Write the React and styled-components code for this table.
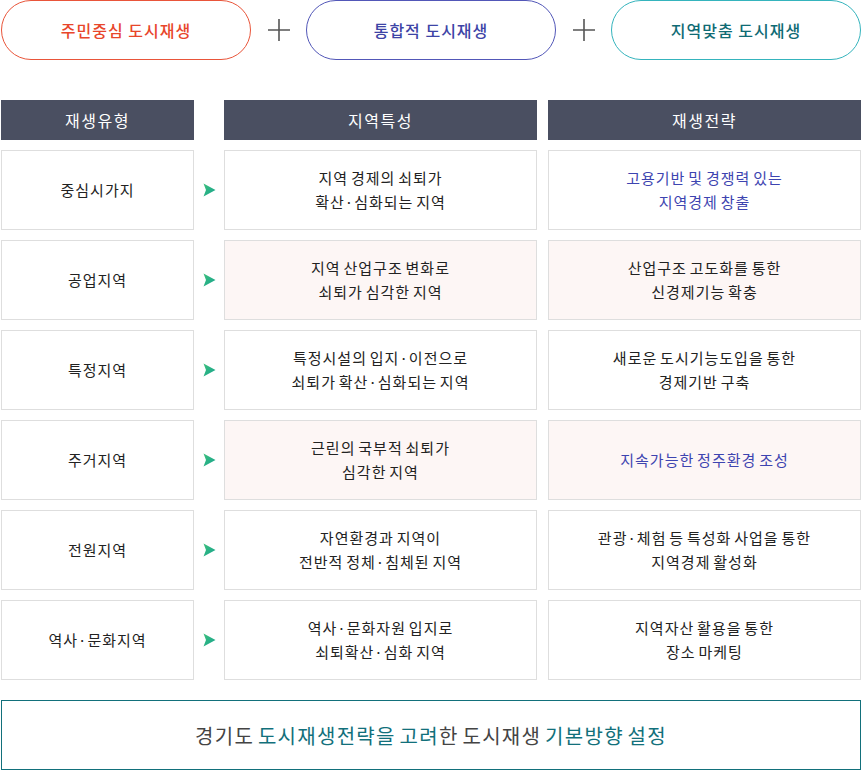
import React from 'react';
import styled, { createGlobalStyle } from 'styled-components';

const GlobalStyle = createGlobalStyle`
  body {
    margin: 0;
    background: #fff;
    font-family: "Noto Sans CJK KR", "Noto Sans", sans-serif;
  }
`;

const pillColors = {
  red: { border: '#e9553a', text: '#e8462b' },
  blue: { border: '#5257b8', text: '#3d44a6' },
  teal: { border: '#35b4bd', text: '#0f6b74' }
};

const Page = styled.div`
  width: 861px;
  padding-left: 1px;
  box-sizing: border-box;
`;

const PillBar = styled.div`
  display: flex;
  align-items: center;
  height: 60px;
`;

const Pill = styled.div`
  width: 250px;
  height: 60px;
  box-sizing: border-box;
  border: 1px solid ${props => pillColors[props.tone].border};
  border-radius: 30px;
  display: flex;
  align-items: center;
  justify-content: center;
  color: ${props => pillColors[props.tone].text};
  font-size: 16px;
  font-weight: 500;
  letter-spacing: 1px;
`;

const Plus = styled.div`
  width: ${props => props.width}px;
  display: flex;
  justify-content: center;
  align-items: center;
  height: 60px;
`;

const Table = styled.div`
  margin-top: 40px;
  display: grid;
  grid-template-columns: 193px 30px 313px 11px 313px;
  row-gap: 10px;
`;

const Head = styled.div`
  height: 40px;
  background: #4a4f61;
  color: #fff;
  font-size: 16px;
  letter-spacing: 1.5px;
  display: flex;
  align-items: center;
  justify-content: center;
  grid-column: ${props => props.col};
`;

const Cell = styled.div`
  height: 80px;
  box-sizing: border-box;
  border: 1px solid #dedede;
  background: ${props => (props.pink ? '#fdf6f5' : '#fff')};
  color: ${props => (props.blue ? '#3d44b0' : '#222')};
  font-size: 15px;
  line-height: 24px;
  letter-spacing: 1px;
  word-spacing: -1.5px;
  display: flex;
  align-items: center;
  justify-content: center;
  text-align: center;
  padding-bottom: 1px;
`;

const ArrowSlot = styled.div`
  display: flex;
  align-items: center;
  justify-content: center;
  padding-left: 1px;
`;

const Footer = styled.div`
  margin-top: 20px;
  height: 70px;
  box-sizing: border-box;
  border: 1px solid #12707b;
  display: flex;
  align-items: center;
  justify-content: center;
  font-size: 20px;
  color: #444;
  letter-spacing: 1.3px;
  word-spacing: -2px;
`;

const Accent = styled.span`
  color: #12707b;
`;

const PlusIcon = () => (
  <svg width="22" height="22" viewBox="0 0 22 22">
    <path d="M11 0v22M0 11h22" stroke="#555" strokeWidth="1.6" />
  </svg>
);

const Arrow = () => (
  <svg width="13" height="14" viewBox="0 0 13 14">
    <defs>
      <linearGradient id="ag" x1="0" y1="0" x2="1" y2="1">
        <stop offset="0" stopColor="#3cc07c" />
        <stop offset="1" stopColor="#17a38f" />
      </linearGradient>
    </defs>
    <path d="M0.5 0.5L12.5 7L0.5 13.5L3 7Z" fill="url(#ag)" />
  </svg>
);

const rows = [
  {
    type: '중심시가지',
    feature: ['지역 경제의 쇠퇴가', '확산·심화되는 지역'],
    strategy: ['고용기반 및 경쟁력 있는', '지역경제 창출'],
    blue: true
  },
  {
    type: '공업지역',
    feature: ['지역 산업구조 변화로', '쇠퇴가 심각한 지역'],
    strategy: ['산업구조 고도화를 통한', '신경제기능 확충'],
    pink: true
  },
  {
    type: '특정지역',
    feature: ['특정시설의 입지·이전으로', '쇠퇴가 확산·심화되는 지역'],
    strategy: ['새로운 도시기능도입을 통한', '경제기반 구축']
  },
  {
    type: '주거지역',
    feature: ['근린의 국부적 쇠퇴가', '심각한 지역'],
    strategy: ['지속가능한 정주환경 조성'],
    pink: true,
    blue: true
  },
  {
    type: '전원지역',
    feature: ['자연환경과 지역이', '전반적 정체·침체된 지역'],
    strategy: ['관광·체험 등 특성화 사업을 통한', '지역경제 활성화']
  },
  {
    type: '역사·문화지역',
    feature: ['역사·문화자원 입지로', '쇠퇴확산·심화 지역'],
    strategy: ['지역자산 활용을 통한', '장소 마케팅']
  }
];

const Lines = ({ lines }) => (
  <div>
    {lines.map(line => (
      <div key={line}>{line}</div>
    ))}
  </div>
);

export default function App() {
  return (
    <Page>
      <GlobalStyle />
      <PillBar>
        <Pill tone="red">주민중심 도시재생</Pill>
        <Plus width={55}>
          <PlusIcon />
        </Plus>
        <Pill tone="blue">통합적 도시재생</Pill>
        <Plus width={55}>
          <PlusIcon />
        </Plus>
        <Pill tone="teal">지역맞춤 도시재생</Pill>
      </PillBar>

      <Table>
        <Head col="1">재생유형</Head>
        <Head col="3">지역특성</Head>
        <Head col="5">재생전략</Head>
        {rows.map(row => (
          <React.Fragment key={row.type}>
            <Cell>{row.type}</Cell>
            <ArrowSlot>
              <Arrow />
            </ArrowSlot>
            <Cell pink={row.pink}>
              <Lines lines={row.feature} />
            </Cell>
            <div />
            <Cell pink={row.pink} blue={row.blue}>
              <Lines lines={row.strategy} />
            </Cell>
          </React.Fragment>
        ))}
      </Table>

      <Footer>
        경기도&nbsp;<Accent>도시재생전략을 고려</Accent>한 도시재생&nbsp;<Accent>기본방향 설정</Accent>
      </Footer>
    </Page>
  );
}
